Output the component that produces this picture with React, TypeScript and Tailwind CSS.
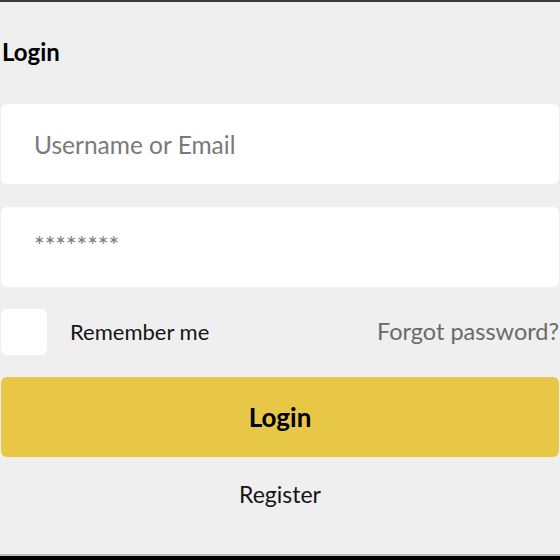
export default function App() {
  return (
    <div className="w-[560px] h-[560px] overflow-hidden bg-[#efefef] flex flex-col font-['Lato',sans-serif]">
      <div className="h-[2px] bg-[#3a3a3a] shrink-0" />
      <div className="flex-1 flex flex-col px-px">
        <h1 className="mt-[36px] pl-px text-[24px] font-bold leading-[28px] text-black">Login</h1>

        <input
          className="mt-[38px] h-[80px] w-full rounded-md bg-white px-[33px] text-[24.5px] text-[#333] placeholder:text-[#7a7a7a] outline-none"
          placeholder="Username or Email"
        />
        <input
          type="password"
          className="mt-[23px] h-[80px] w-full rounded-md bg-white px-[33px] pb-[5px] text-[25px] text-[#333] placeholder:text-[#7a7a7a] outline-none"
          placeholder="********"
        />

        <div className="mt-[21px] flex items-center h-[47px]">
          <div className="w-[46px] h-[46px] rounded-md bg-white shrink-0" />
          <span className="ml-[23px] text-[22px] text-[#151515]">Remember me</span>
          <span className="ml-auto text-[23.5px] text-[#6a6a6a]">Forgot password?</span>
        </div>

        <button className="mt-[22px] h-[80px] w-full rounded-md bg-[#e8c646] text-[26px] font-bold text-black">
          Login
        </button>

        <div className="mt-[20px] text-center text-[23px] text-[#151515]">Register</div>
      </div>
      <div className="h-[2px] bg-[#bdbdbd] shrink-0" />
      <div className="h-[4px] bg-black shrink-0" />
    </div>
  );
}
